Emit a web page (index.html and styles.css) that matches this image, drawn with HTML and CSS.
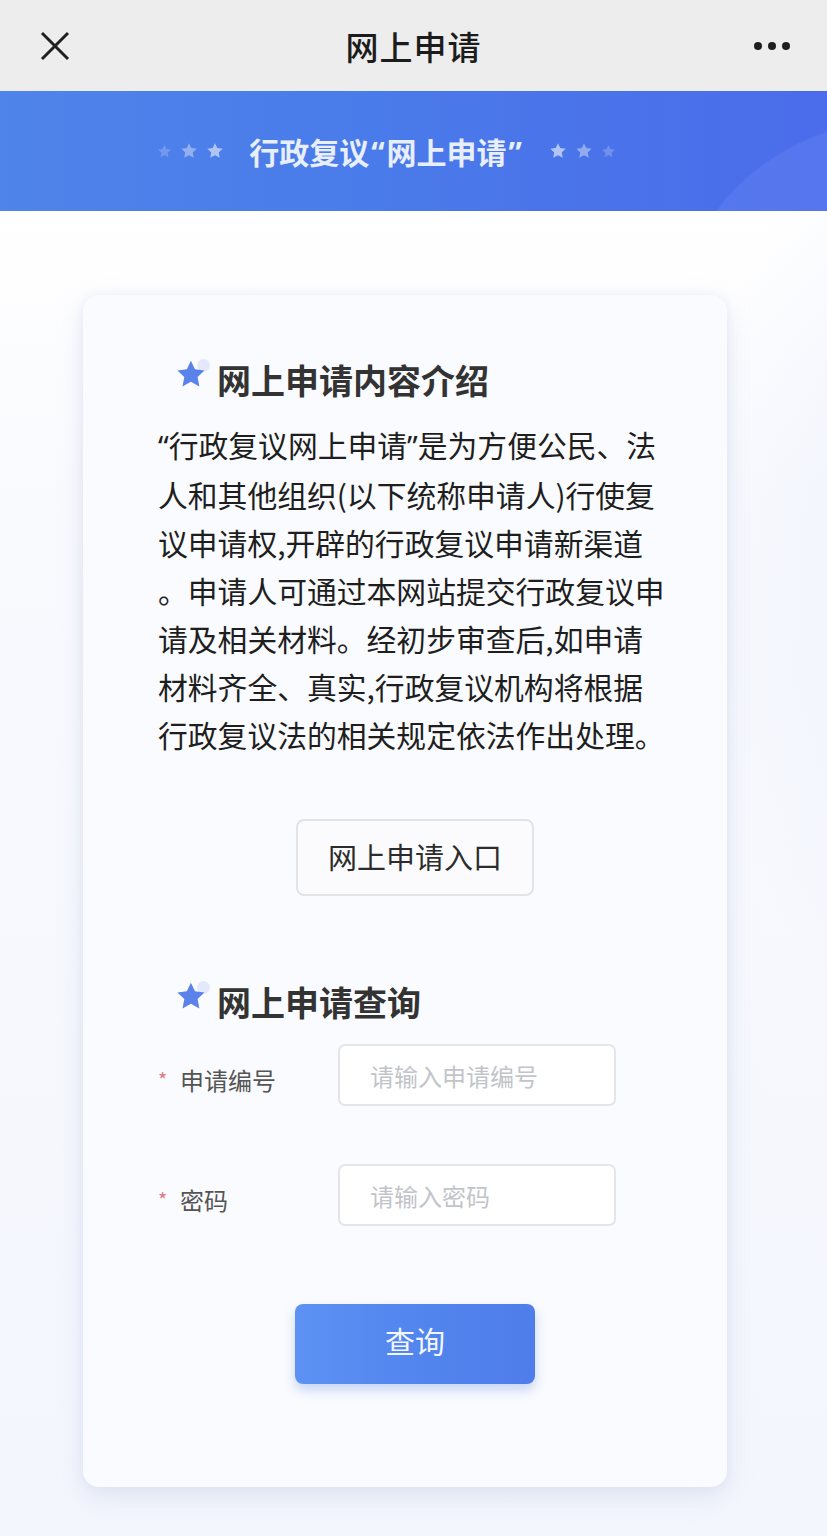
FILE: index.html
```html
<!DOCTYPE html>
<html lang="zh-CN">
<head>
    <meta charset="UTF-8">
    <meta name="viewport" content="width=device-width, initial-scale=1.0">
    <title>网上申请</title>
    <link rel="stylesheet" href="styles.css">
</head>
<body>
    <header class="topbar">
        <span class="topbar-close">
            <svg width="32" height="32" viewBox="0 0 32 32">
                <path d="M3 3 L29 29 M29 3 L3 29" stroke="#1f1f1f" stroke-width="3" fill="none"/>
            </svg>
        </span>
        <h1 class="topbar-title">网上申请</h1>
        <span class="topbar-more">
            <i></i><i></i><i></i>
        </span>
    </header>

    <section class="banner">
        <span class="banner-stars left">
            <svg class="mini-star s1" viewBox="0 0 24 24"><path d="M12 1.5l3.1 6.6 7.2.9-5.3 5 1.4 7.1L12 17.6l-6.4 3.5L7 14l-5.3-5 7.2-.9z"/></svg>
            <svg class="mini-star s2" viewBox="0 0 24 24"><path d="M12 1.5l3.1 6.6 7.2.9-5.3 5 1.4 7.1L12 17.6l-6.4 3.5L7 14l-5.3-5 7.2-.9z"/></svg>
            <svg class="mini-star s3" viewBox="0 0 24 24"><path d="M12 1.5l3.1 6.6 7.2.9-5.3 5 1.4 7.1L12 17.6l-6.4 3.5L7 14l-5.3-5 7.2-.9z"/></svg>
        </span>
        <h2 class="banner-title">行政复议<span class="q">“</span>网上申请<span class="q">”</span></h2>
        <span class="banner-stars right">
            <svg class="mini-star s3" viewBox="0 0 24 24"><path d="M12 1.5l3.1 6.6 7.2.9-5.3 5 1.4 7.1L12 17.6l-6.4 3.5L7 14l-5.3-5 7.2-.9z"/></svg>
            <svg class="mini-star s2" viewBox="0 0 24 24"><path d="M12 1.5l3.1 6.6 7.2.9-5.3 5 1.4 7.1L12 17.6l-6.4 3.5L7 14l-5.3-5 7.2-.9z"/></svg>
            <svg class="mini-star s1" viewBox="0 0 24 24"><path d="M12 1.5l3.1 6.6 7.2.9-5.3 5 1.4 7.1L12 17.6l-6.4 3.5L7 14l-5.3-5 7.2-.9z"/></svg>
        </span>
    </section>

    <main class="card">
        <h3 class="section-title">
            <svg class="title-star" viewBox="0 0 34 34">
                <circle cx="27" cy="7" r="6" fill="#e3e9fa"/>
                <path d="M15 2.5l3.9 8.1 8.9 1.2-6.5 6.2 1.7 8.8L15 22.5l-7.9 4.3 1.7-8.8-6.5-6.2 8.9-1.2z" fill="#5a82ea"/>
            </svg>
            网上申请内容介绍
        </h3>

        <div class="intro">
            <span class="line"><span class="q">“</span>行政复议网上申请<span class="q">”</span>是为方便公民、法</span>
            <span class="line">人和其他组织(以下统称申请人)行使复</span>
            <span class="line">议申请权,开辟的行政复议申请新渠道</span>
            <span class="line">。申请人可通过本网站提交行政复议申</span>
            <span class="line">请及相关材料。经初步审查后,如申请</span>
            <span class="line">材料齐全、真实,行政复议机构将根据</span>
            <span class="line">行政复议法的相关规定依法作出处理。</span>
        </div>

        <div class="actions">
            <button class="btn-entry">网上申请入口</button>
        </div>

        <h3 class="section-title second">
            <svg class="title-star" viewBox="0 0 34 34">
                <circle cx="27" cy="7" r="6" fill="#e3e9fa"/>
                <path d="M15 2.5l3.9 8.1 8.9 1.2-6.5 6.2 1.7 8.8L15 22.5l-7.9 4.3 1.7-8.8-6.5-6.2 8.9-1.2z" fill="#5a82ea"/>
            </svg>
            网上申请查询
        </h3>

        <form class="query-form" onsubmit="return false;">
            <div class="form-row">
                <label class="form-label" for="apply-no"><span class="req">*</span>申请编号</label>
                <input class="form-input" id="apply-no" type="text" placeholder="请输入申请编号">
            </div>
            <div class="form-row">
                <label class="form-label" for="apply-pwd"><span class="req">*</span>密码</label>
                <input class="form-input" id="apply-pwd" type="password" placeholder="请输入密码">
            </div>
            <div class="actions">
                <button class="btn-query" type="submit">查询</button>
            </div>
        </form>
    </main>
</body>
</html>
```

FILE: styles.css
```css
* {
    margin: 0;
    padding: 0;
    box-sizing: border-box;
}

body {
    font-family: "Noto Sans CJK SC", "Noto Sans", sans-serif;
    background:
        radial-gradient(ellipse 420px 700px at 980px 560px, rgba(235, 240, 252, 0.9), rgba(235, 240, 252, 0) 70%),
        linear-gradient(180deg, #ffffff 210px, #f9fafe 500px, #f3f6fd 1536px);
    min-height: 1536px;
    color: #222;
}

/* top navigation */
.topbar {
    height: 91px;
    background: #ededed;
    display: flex;
    align-items: center;
    justify-content: space-between;
    padding: 0 36px 0 39px;
}

.topbar-close {
    width: 32px;
    height: 32px;
    display: flex;
}

.topbar-title {
    font-size: 33px;
    font-weight: 500;
    color: #1c1c1c;
    letter-spacing: 1px;
    margin-left: 2px;
}

.topbar-more {
    display: flex;
    gap: 6px;
    width: 37px;
}

.topbar-more i {
    width: 8px;
    height: 8px;
    border-radius: 50%;
    background: #1f1f1f;
}

/* banner */
.banner {
    height: 120px;
    background:
        radial-gradient(circle at 900px 260px, rgba(110, 140, 245, 0.3) 0, rgba(110, 140, 245, 0.3) 230px, rgba(110, 140, 245, 0) 232px),
        linear-gradient(90deg, #4f84ea 0%, #4a7bea 45%, #4a72ea 75%, #4b6ceb 100%);
    display: flex;
    align-items: center;
    justify-content: center;
    gap: 25px;
    padding-right: 54px;
}

.banner-title {
    font-size: 30px;
    font-weight: 700;
    color: #e8eefc;
}

.banner-title .q {
    font-family: "Noto Sans", sans-serif;
    padding: 0 2px;
}

.banner-stars {
    display: flex;
    gap: 8px;
    align-items: center;
}

.mini-star {
    width: 18px;
    height: 18px;
    fill: #b7c9f6;
}

.mini-star.s1 { opacity: 0.35; width: 15px; height: 15px; }
.mini-star.s2 { opacity: 0.65; }
.mini-star.s3 { opacity: 0.95; }

/* content card */
.card {
    width: 644px;
    margin: 84px 0 0 83px;
    background: #fafbfe;
    border-radius: 16px;
    box-shadow: 0 10px 24px rgba(190, 198, 225, 0.35), 0 0 10px rgba(210, 216, 235, 0.3);
    padding: 62px 55px 103px 75px;
}

.section-title {
    display: flex;
    align-items: center;
    gap: 6px;
    margin-left: 20px;
    height: 44px;
    font-size: 34px;
    font-weight: 700;
    color: #333;
}

.section-title.second {
    margin-top: 83px;
}

.title-star {
    width: 36px;
    height: 36px;
    margin-top: -6px;
    margin-left: -3px;
}

.intro {
    margin-top: 19px;
    font-size: 29.8px;
    line-height: 48px;
    color: #1e1e1e;
}

.intro .line {
    display: block;
    white-space: nowrap;
}

.intro .q {
    font-family: "Noto Sans", sans-serif;
}

.actions {
    display: flex;
    justify-content: center;
}

.btn-entry {
    margin-top: 61px;
    width: 238px;
    height: 77px;
    border: 2px solid #e2e3e7;
    border-radius: 8px;
    background: #fbfbfd;
    font-family: inherit;
    font-size: 29px;
    color: #2c2c2c;
    padding-bottom: 4px;
}

/* query form */
.query-form {
    margin-top: 21px;
}

.form-row {
    display: flex;
    align-items: center;
    margin-bottom: 58px;
}

.form-label {
    width: 180px;
    padding-top: 8px;
    display: flex;
    align-items: center;
    font-size: 24px;
    color: #555;
}

.form-label .req {
    width: 22px;
    color: #e07a80;
    font-size: 20px;
}

.form-input {
    width: 278px;
    height: 62px;
    border: 2px solid #e4e5ea;
    border-radius: 7px;
    background: #ffffff;
    padding: 0 30px;
    font-family: inherit;
    font-size: 24px;
    color: #333;
    outline: none;
}

.form-input::placeholder {
    color: #c2c4ca;
}

.btn-query {
    margin-top: 20px;
    width: 240px;
    height: 80px;
    border: none;
    border-radius: 8px;
    background: linear-gradient(90deg, #5d92f4, #5285ee 50%, #4f7dea);
    box-shadow: 0 6px 12px rgba(80, 125, 230, 0.3);
    font-family: inherit;
    font-size: 30px;
    color: #f2f6ff;
    padding-bottom: 8px;
}
```
